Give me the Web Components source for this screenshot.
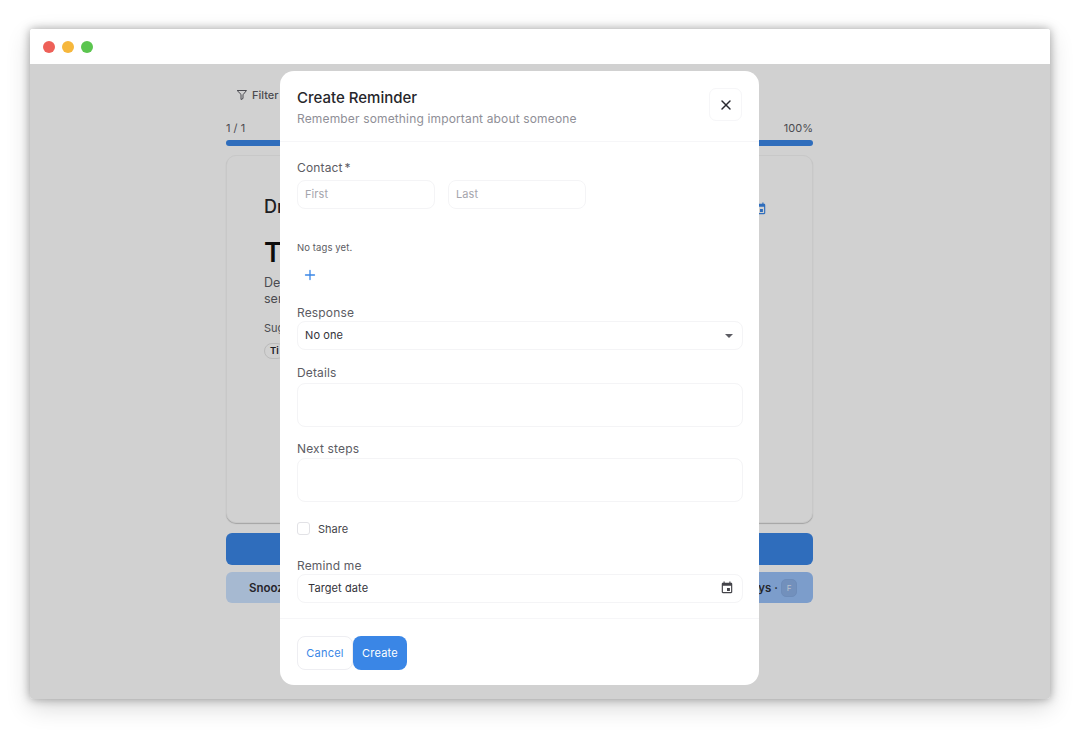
<!DOCTYPE html>
<html lang="en">
<head>
<meta charset="utf-8">
<title>Create Reminder</title>
<style>
  html, body { margin: 0; background: #fff; font-family: Inter, "Noto Sans", sans-serif; }
  body { padding: 29px 30px 32px; height: 670px; }
</style>
</head>
<body>
<app-window>
  <review-panel></review-panel>
  <reminder-dialog slot="overlay"></reminder-dialog>
</app-window>

<script>
(function () {
  // window frame with traffic lights, the overlay slot dims whatever is below it
  class AppWindow extends HTMLElement {
    constructor() {
      super();
      this.attachShadow({ mode: "open" }).innerHTML = `
        <style>
          :host { display: block; width: 1020px; height: 670px; }
          .frame { position: relative; height: 100%; display: flex; flex-direction: column; background: #fff; border-radius: 3px; overflow: hidden; }
          .shadow { height: 100%; border-radius: 3px; box-shadow: 0 0 10px rgba(0,0,0,.34), 0 8px 24px rgba(0,0,0,.16); }
          .bar { flex: none; height: 35px; display: flex; align-items: center; gap: 7px; padding-left: 13px; background: #fff; position: relative; z-index: 3; }
          .dot { width: 12px; height: 12px; border-radius: 50%; }
          .content { flex: 1; min-height: 0; }
          .scrim { position: absolute; inset: 35px 0 0 0; background: rgba(0,0,0,.18); }
        </style>
        <div class="shadow"><div class="frame">
          <div class="bar">
            <span class="dot" style="background:#ee6058"></span>
            <span class="dot" style="background:#f6b73c"></span>
            <span class="dot" style="background:#5bc54f"></span>
          </div>
          <div class="content"><slot></slot></div>
          <div class="scrim"></div>
          <slot name="overlay"></slot>
        </div></div>`;
    }
  }

  // the page behind the dialog, mostly covered by it
  class ReviewPanel extends HTMLElement {
    constructor() {
      super();
      this.attachShadow({ mode: "open" }).innerHTML = `
        <style>
          :host { display: block; width: 587px; margin-left: 196px; color: #26262b; }
          .filter { display: flex; align-items: center; gap: 4px; height: 22px; margin: 20px 0 0 10px; font-size: 11px; font-weight: 500; color: #5c5c63; }
          .progress { display: flex; justify-content: space-between; margin-top: 14px; font-size: 11px; line-height: 16px; color: #5c5c63; }
          .track { height: 6px; margin-top: 4px; border-radius: 3px; background: #3a86e6; }
          .card { position: relative; box-sizing: border-box; height: 368px; margin-top: 9px; padding: 39px 37px 0; background: #fff; border: 1px solid #f4f4f4; border-radius: 10px; box-shadow: 0 1px 1px rgba(0,0,0,.22); }
          .eyebrow { font-size: 18px; line-height: 24px; font-weight: 500; }
          .heading { margin-top: 17px; font-size: 27px; line-height: 34px; font-weight: 600; color: #111; }
          .desc { margin-top: 5px; font-size: 12.500px; line-height: 16px; color: #5c5c63; }
          .sugg { margin-top: 13px; font-size: 11px; line-height: 16px; color: #5c5c63; }
          .chip { display: inline-block; margin-top: 7px; padding: 0 5px; font-size: 9.500px; line-height: 14px; font-weight: 600; border: 1px solid #e4e4e4; border-radius: 8px; }
          .cal { position: absolute; top: 46px; right: 45px; color: #3a86e6; }
          .primary { height: 32px; margin-top: 10px; background: #3a86e6; border-radius: 6px; }
          .row { display: flex; height: 31px; margin-top: 7px; font-size: 11.500px; font-weight: 600; color: #2e2e34; }
          .row div { flex: 1; display: flex; align-items: center; }
          .snooze { padding-left: 23px; background: #cbe2ff; border-radius: 6px 0 0 6px; }
          .later { justify-content: flex-end; gap: 3px; padding-right: 16px; background: #98c0f8; border-radius: 0 6px 6px 0; }
          kbd { display: inline-block; width: 16px; height: 18px; font: inherit; font-size: 8px; font-weight: 400; line-height: 16px; text-align: center; color: #e2ecfa; background: #8cb0e6; border: 1px solid #86abe2; border-radius: 5px; box-sizing: border-box; }
        </style>
        <div class="filter">
          <svg width="12" height="12" viewBox="0 0 24 24" fill="none" stroke="currentColor" stroke-width="2" stroke-linecap="round" stroke-linejoin="round"><path d="M3 3h18l-7 8.500V19l-4 2v-9.500z"/></svg>
          <span>Filter</span>
        </div>
        <div class="progress"><span>1 / 1</span><span>100%</span></div>
        <div class="track"></div>
        <div class="card">
          <svg class="cal" width="14" height="14" viewBox="0 0 24 24" fill="currentColor"><path d="M17 12h-5v5h5v-5zM16 1v2H8V1H6v2H5c-1.110 0-1.990.9-1.990 2L3 19c0 1.100.89 2 2 2h14c1.100 0 2-.9 2-2V5c0-1.100-.9-2-2-2h-1V1h-2zm3 18H5V8h14v11z"/></svg>
          <div class="eyebrow">Dr</div>
          <div class="heading">To</div>
          <div class="desc">De<br>ser</div>
          <div class="sugg">Sug</div>
          <span class="chip">Ti</span>
        </div>
        <div class="primary"></div>
        <div class="row">
          <div class="snooze">Snooz</div>
          <div class="later">ys · <kbd>F</kbd></div>
        </div>`;
    }
  }

  // label on top, control below
  class FormField extends HTMLElement {
    constructor() {
      super();
      this.attachShadow({ mode: "open" }).innerHTML = `
        <style>
          :host { display: block; }
          .label { padding-top: 1px; margin-bottom: -1px; font-size: 12px; line-height: 18px; letter-spacing: .15px; color: #5c5c63; }
          .req { margin-left: 2px; }
        </style>
        <div class="label"></div>
        <slot></slot>`;
    }
    connectedCallback() {
      const label = this.shadowRoot.querySelector(".label");
      label.textContent = this.getAttribute("label") || "";
      if (this.hasAttribute("required")) {
        const star = document.createElement("span");
        star.className = "req";
        star.textContent = "*";
        label.appendChild(star);
      }
    }
  }

  // input look-alike; text stays in the slot so it's plain page text
  class TextBox extends HTMLElement {
    constructor() {
      super();
      this.attachShadow({ mode: "open" }).innerHTML = `
        <style>
          :host { display: flex; align-items: center; justify-content: space-between; box-sizing: border-box; height: var(--h, 29px); padding: 0 var(--pr, 8px) 2px var(--pl, 7px); font-size: 11px; letter-spacing: .1px; color: var(--c, #33333a); background: #fff; border: 1px solid #f4f4f6; border-radius: 8px; }
        </style>
        <slot></slot><slot name="end"></slot>`;
    }
  }

  class ReminderDialog extends HTMLElement {
    constructor() {
      super();
      this.attachShadow({ mode: "open" }).innerHTML = `
        <style>
          :host { position: absolute; left: 250px; top: 42px; width: 479px; height: 614px; display: flex; flex-direction: column; background: #fff; border-radius: 14px; color: #26262b; }
          header { flex: none; height: 71px; box-sizing: border-box; padding: 16px 17px 0; display: flex; justify-content: space-between; border-bottom: 1px solid #f6f6f8; }
          h2 { margin: 0; font-size: 15px; line-height: 22px; font-weight: 500; }
          .sub { font-size: 12px; line-height: 20px; color: #8f8f97; letter-spacing: .15px; }
          .close { width: 33px; height: 33px; margin-top: 1px; box-sizing: border-box; display: flex; align-items: center; justify-content: center; border: 1px solid #f6f6f8; border-radius: 7px; color: #2a2a30; }
          .body { flex: 1; padding: 16px 16px 0 17px; }
          .names { display: flex; gap: 13px; margin-top: 4px; }
          .names text-box { width: 138px; --c: #a5a5ad; }
          .tags { margin-top: 32px; font-size: 9.500px; line-height: 14px; color: #5c5c63; letter-spacing: .1px; }
          .plus { display: flex; align-items: center; height: 24px; margin: 8px 0 0 7px; color: #3a86e6; }
          .caret { width: 0; height: 0; margin-top: 2px; border: 4.500px solid transparent; border-top: 4.500px solid #5c5c63; border-bottom: 0; }
          .share { display: flex; align-items: center; gap: 8px; height: 19px; margin-top: 17px; font-size: 11px; color: #44444a; }
          .check { width: 13px; height: 13px; box-sizing: border-box; border: 1px solid #e2e2e6; border-radius: 3px; }
          footer { flex: none; height: 67px; box-sizing: border-box; display: flex; padding: 17px 17px 0; border-top: 1px solid #f6f6f8; }
          .btn { box-sizing: border-box; height: 34px; display: flex; align-items: center; justify-content: center; font-size: 11px; font-weight: 400; border-radius: 8px; letter-spacing: .2px; }
          .cancel { width: 56px; color: #3a86e6; border: 1px solid #eeeef2; }
          .create { width: 54px; color: #fff; background: #3a86e6; }
        </style>
        <header>
          <div>
            <h2>Create Reminder</h2>
            <div class="sub">Remember something important about someone</div>
          </div>
          <div class="close">
            <svg width="16" height="16" viewBox="0 0 24 24" fill="none" stroke="currentColor" stroke-width="2.200" stroke-linecap="round"><path d="M6 6l12 12M18 6L6 18"/></svg>
          </div>
        </header>
        <div class="body">
          <form-field label="Contact" required>
            <div class="names">
              <text-box>First</text-box>
              <text-box>Last</text-box>
            </div>
          </form-field>
          <div class="tags">No tags yet.</div>
          <div class="plus">
            <svg width="12" height="12" viewBox="0 0 12 12" fill="none" stroke="currentColor" stroke-width="1.300" stroke-linecap="round"><path d="M6 1.500v9M1.500 6h9"/></svg>
          </div>
          <form-field label="Response" style="margin-top:16px">
            <text-box style="--pr:9px"><span>No one</span><span slot="end" class="caret"></span></text-box>
          </form-field>
          <form-field label="Details" style="margin-top:13px">
            <text-box style="--h:44px;margin-top:2px"></text-box>
          </form-field>
          <form-field label="Next steps" style="margin-top:12px">
            <text-box style="--h:44px;margin-top:1px"></text-box>
          </form-field>
          <div class="share"><span class="check"></span><span>Share</span></div>
          <form-field label="Remind me" style="margin-top:18px">
            <text-box style="--pl:10px;--pr:8px">
              <span>Target date</span>
              <svg slot="end" width="14" height="14" viewBox="0 0 24 24" fill="#44444a"><path d="M17 12h-5v5h5v-5zM16 1v2H8V1H6v2H5c-1.110 0-1.990.9-1.990 2L3 19c0 1.100.89 2 2 2h14c1.100 0 2-.9 2-2V5c0-1.100-.9-2-2-2h-1V1h-2zm3 18H5V8h14v11z"/></svg>
            </text-box>
          </form-field>
        </div>
        <footer>
          <div class="btn cancel">Cancel</div>
          <div class="btn create">Create</div>
        </footer>`;
    }
  }

  customElements.define("app-window", AppWindow);
  customElements.define("review-panel", ReviewPanel);
  customElements.define("form-field", FormField);
  customElements.define("text-box", TextBox);
  customElements.define("reminder-dialog", ReminderDialog);
})();
</script>
</body>
</html>
